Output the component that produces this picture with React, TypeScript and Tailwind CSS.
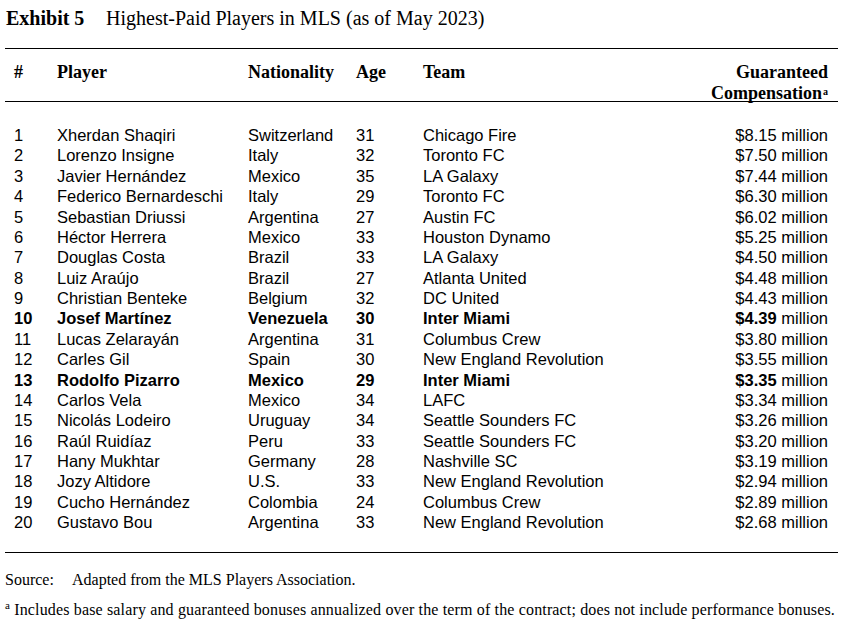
const players = [
  ["1", "Xherdan Shaqiri", "Switzerland", "31", "Chicago Fire", "$8.15"],
  ["2", "Lorenzo Insigne", "Italy", "32", "Toronto FC", "$7.50"],
  ["3", "Javier Hernández", "Mexico", "35", "LA Galaxy", "$7.44"],
  ["4", "Federico Bernardeschi", "Italy", "29", "Toronto FC", "$6.30"],
  ["5", "Sebastian Driussi", "Argentina", "27", "Austin FC", "$6.02"],
  ["6", "Héctor Herrera", "Mexico", "33", "Houston Dynamo", "$5.25"],
  ["7", "Douglas Costa", "Brazil", "33", "LA Galaxy", "$4.50"],
  ["8", "Luiz Araújo", "Brazil", "27", "Atlanta United", "$4.48"],
  ["9", "Christian Benteke", "Belgium", "32", "DC United", "$4.43"],
  ["10", "Josef Martínez", "Venezuela", "30", "Inter Miami", "$4.39"],
  ["11", "Lucas Zelarayán", "Argentina", "31", "Columbus Crew", "$3.80"],
  ["12", "Carles Gil", "Spain", "30", "New England Revolution", "$3.55"],
  ["13", "Rodolfo Pizarro", "Mexico", "29", "Inter Miami", "$3.35"],
  ["14", "Carlos Vela", "Mexico", "34", "LAFC", "$3.34"],
  ["15", "Nicolás Lodeiro", "Uruguay", "34", "Seattle Sounders FC", "$3.26"],
  ["16", "Raúl Ruidíaz", "Peru", "33", "Seattle Sounders FC", "$3.20"],
  ["17", "Hany Mukhtar", "Germany", "28", "Nashville SC", "$3.19"],
  ["18", "Jozy Altidore", "U.S.", "33", "New England Revolution", "$2.94"],
  ["19", "Cucho Hernández", "Colombia", "24", "Columbus Crew", "$2.89"],
  ["20", "Gustavo Bou", "Argentina", "33", "New England Revolution", "$2.68"],
];

const serif = "font-['Liberation_Serif','DejaVu_Serif',serif]";
const sans = "font-['Liberation_Sans',Arial,sans-serif]";
const cols = "grid grid-cols-[52px_191px_108px_67px_1fr_auto]";

export default function App() {
  return (
    <div className="w-[844px] h-[642px] bg-white text-black overflow-hidden">
      {/* Title */}
      <div className={`${serif} flex items-baseline pt-[7px] pl-[6px] text-[20px] leading-[22px]`}>
        <span className="font-bold w-[100px]">Exhibit 5</span>
        <span>Highest-Paid Players in MLS (as of May 2023)</span>
      </div>

      <div className="ml-[5px] w-[833px] mt-[19px]">
        <div className="border-t-[1.5px] border-black" />

        {/* Header */}
        <div className={`${cols} ${serif} font-bold text-[18px] leading-[20px] h-[53px] pt-[13px] border-b-[1.5px] border-black`}>
          <div className="pl-[9px]">#</div>
          <div>Player</div>
          <div>Nationality</div>
          <div>Age</div>
          <div>Team</div>
          <div className="text-right pr-[10px]">
            Guaranteed
            <br />
            Compensation<span className="text-[10px] align-[4px] ml-[1px]">a</span>
          </div>
        </div>

        {/* Rows */}
        <div className={`${sans} text-[16.5px] leading-[20.37px] pt-[23px] pb-[19px] border-b-[1.5px] border-black`}>
          {players.map((p) => {
            const bold = p[0] === "10" || p[0] === "13";
            return (
              <div key={p[0]} className={`${cols} ${bold ? "font-bold" : ""}`}>
                <div className="pl-[9px]">{p[0]}</div>
                <div>{p[1]}</div>
                <div>{p[2]}</div>
                <div>{p[3]}</div>
                <div>{p[4]}</div>
                <div className="text-right pr-[10px]">
                  {p[5]}
                  <span className="font-normal"> million</span>
                </div>
              </div>
            );
          })}
        </div>
      </div>

      {/* Notes */}
      <div className={`${serif} text-[16px] pl-[5px] mt-[17px] leading-[20px]`}>
        <div className="flex">
          <span className="w-[67px]">Source:</span>
          <span>Adapted from the MLS Players Association.</span>
        </div>
        <div className="mt-[10px] tracking-[0.15px] whitespace-nowrap">
          <sup className="text-[11px]">a</sup> Includes base salary and guaranteed bonuses annualized over the term of the contract; does not include performance bonuses.
        </div>
      </div>
    </div>
  );
}
